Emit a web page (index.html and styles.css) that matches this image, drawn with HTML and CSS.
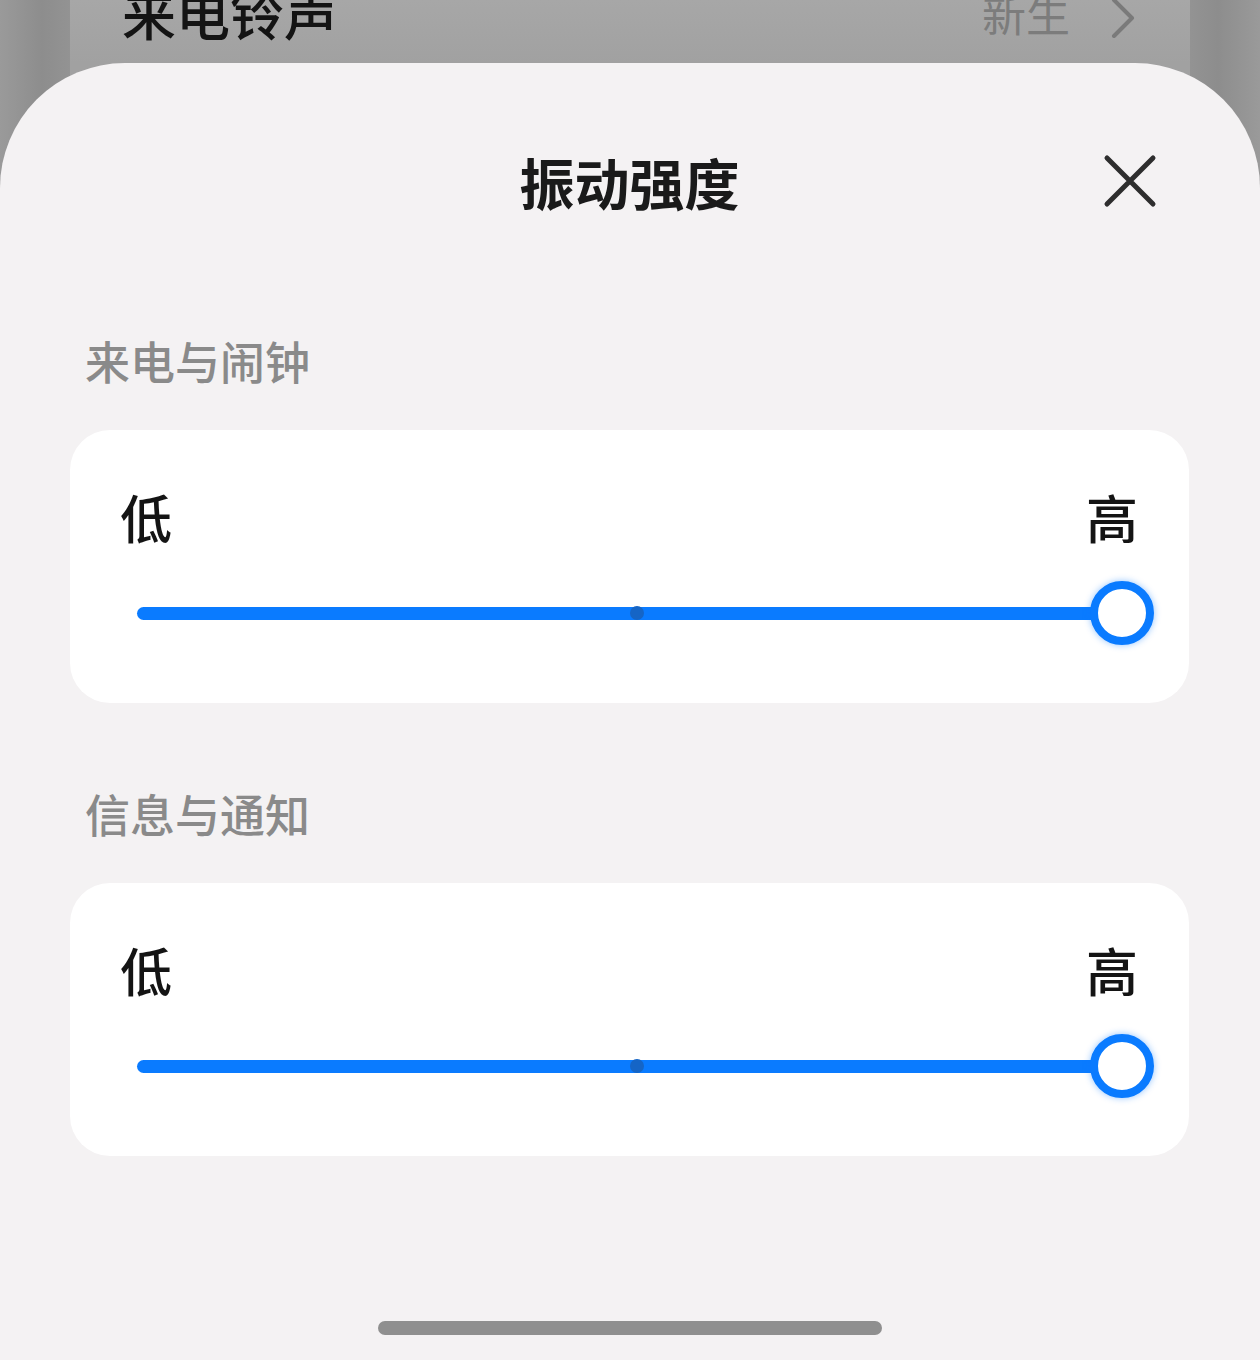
FILE: index.html
```html
<!DOCTYPE html>
<html lang="zh-CN">
<head>
<meta charset="utf-8">
<title>振动强度</title>
<link rel="stylesheet" href="styles.css">
</head>
<body>
<div class="page">
  <div class="backdrop">
    <div class="strip strip-left"></div>
    <div class="bg-card">
      <div class="bg-row">
        <span class="bg-title">来电铃声</span>
        <span class="bg-value">新生</span>
        <svg class="bg-chevron" width="26" height="40" viewBox="0 0 26 40"><path d="M4 2 L22 20 L4 38" fill="none" stroke="#7a7a7a" stroke-width="4" stroke-linecap="round" stroke-linejoin="round"/></svg>
      </div>
    </div>
    <div class="strip strip-right"></div>
  </div>

  <div class="sheet">
    <div class="header">
      <h1 class="title">振动强度</h1>
      <svg class="close" width="56" height="56" viewBox="0 0 56 56"><path d="M4 4 L50 50 M50 4 L4 50" fill="none" stroke="#2e2e2e" stroke-width="5" stroke-linecap="round"/></svg>
    </div>

    <div class="section-label">来电与闹钟</div>
    <div class="card">
      <div class="ends"><span>低</span><span>高</span></div>
      <div class="slider">
        <div class="track"></div>
        <div class="mid-dot"></div>
        <div class="thumb"></div>
      </div>
    </div>

    <div class="section-label second">信息与通知</div>
    <div class="card">
      <div class="ends"><span>低</span><span>高</span></div>
      <div class="slider">
        <div class="track"></div>
        <div class="mid-dot"></div>
        <div class="thumb"></div>
      </div>
    </div>

    <div class="spacer"></div>
    <div class="home-indicator"></div>
  </div>
</div>
</body>
</html>
```

FILE: styles.css
```css
* { box-sizing: border-box; }
html, body {
  margin: 0;
  padding: 0;
}
body {
  width: 1260px;
  height: 1360px;
  overflow: hidden;
  font-family: "Noto Sans CJK SC", "Noto Sans", sans-serif;
  background: #959595;
}
.page {
  position: relative;
  width: 1260px;
  height: 1360px;
}
.backdrop {
  display: flex;
  height: 1360px;
}
.strip {
  width: 70px;
  flex: none;
}
.strip-left {
  background: linear-gradient(to right, #9a9a9a, #8d8d8d 60%, #939393);
}
.strip-right {
  background: linear-gradient(to right, #939393, #8d8d8d 40%, #9a9a9a);
}
.bg-card {
  flex: 1;
  background: linear-gradient(to bottom, #a7a7a7, #a1a1a1 63px);
}
.bg-row {
  display: flex;
  align-items: center;
  height: 54px;
  margin-top: -14px;
  padding-left: 52px;
  padding-right: 54px;
}
.bg-title {
  font-size: 54px;
  line-height: 54px;
  font-weight: 500;
  color: #141414;
}
.bg-value {
  margin-left: auto;
  font-size: 44px;
  line-height: 54px;
  color: #7c7c7c;
  margin-right: 40px;
}
.bg-chevron {
  margin-top: 10px;
}

.sheet {
  position: absolute;
  left: 0;
  top: 63px;
  width: 1260px;
  height: 1297px;
  background: #f4f2f3;
  border-radius: 125px 125px 0 0;
  display: flex;
  flex-direction: column;
  padding: 0 71px 0 70px;
}
.header {
  position: relative;
  height: 240px;
  display: flex;
  align-items: center;
  justify-content: center;
  margin: 0 -70px;
}
.title {
  margin: -4px 0 0 0;
  font-size: 55px;
  line-height: 60px;
  font-weight: 700;
  color: #1a1a1a;
}
.close {
  position: absolute;
  right: 100px;
  top: 91px;
}
.section-label {
  font-size: 45px;
  line-height: 60px;
  font-weight: 500;
  color: #8a8a8a;
  padding-left: 15px;
  margin-top: 28px;
  margin-bottom: 39px;
}
.section-label.second {
  margin-top: 81px;
}
.card {
  background: #ffffff;
  border-radius: 40px;
  height: 273px;
  padding: 57px 51px 0 50px;
  display: flex;
  flex-direction: column;
}
.ends {
  display: flex;
  justify-content: space-between;
  font-size: 52px;
  line-height: 60px;
  font-weight: 500;
  color: #141414;
}
.slider {
  position: relative;
  height: 64px;
  margin: 34px 16px 0 17px;
  display: flex;
  align-items: center;
}
.track {
  width: 100%;
  height: 13px;
  border-radius: 7px;
  background: #0a7bff;
}
.mid-dot {
  position: absolute;
  left: 493px;
  top: 25px;
  width: 14px;
  height: 14px;
  border-radius: 50%;
  background: #1565c6;
}
.thumb {
  position: absolute;
  right: -32px;
  top: 0;
  width: 64px;
  height: 64px;
  border-radius: 50%;
  border: 8px solid #0a7bff;
  background: #ffffff;
  box-shadow: 0 0 7px rgba(10, 123, 255, 0.45);
}
.spacer {
  flex: 1;
}
.home-indicator {
  align-self: center;
  width: 504px;
  height: 14px;
  border-radius: 7px;
  background: #8f8f8f;
  margin-bottom: 25px;
  margin-left: 1px;
}
```
